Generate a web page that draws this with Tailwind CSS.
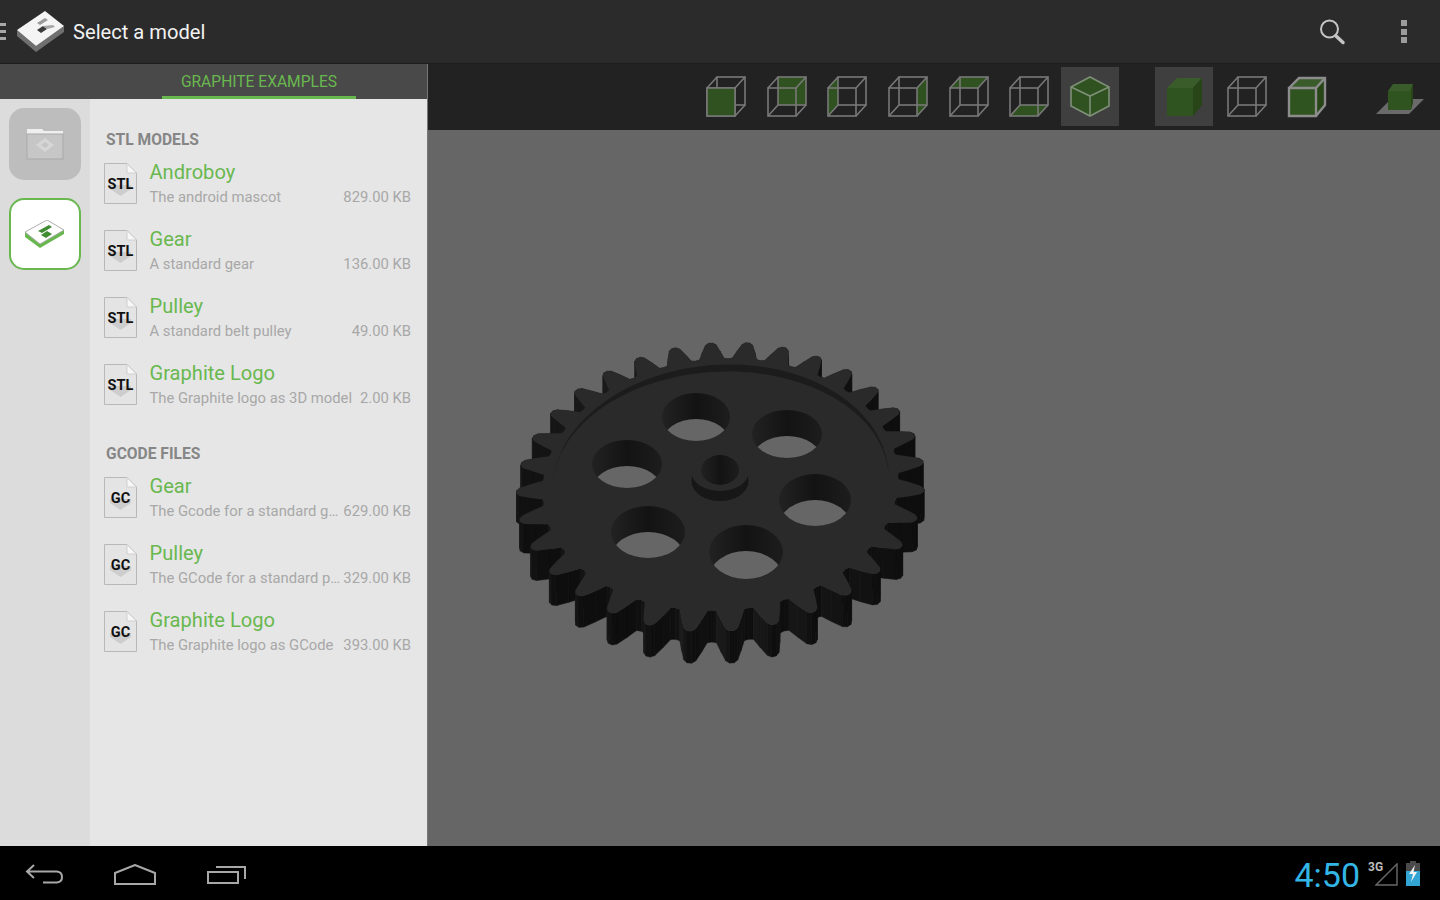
<!DOCTYPE html>
<html lang="en">
<head>
    <meta charset="UTF-8">
    <title>Select a model</title>
    <script src="https://cdn.jsdelivr.net/npm/@tailwindcss/browser@4"></script>
</head>
<body class="bg-black font-['Roboto',sans-serif]">
    <!-- shared icon shapes -->
    <svg class="hidden">
        <symbol id="wire" viewBox="0 0 40 42">
            <g fill="none" stroke="#787878" stroke-width="1.6">
                <rect x="1" y="12" width="28" height="28"/>
                <rect x="11" y="1" width="28" height="28"/>
                <path d="M1 12 11 1M29 12 39 1M1 40 11 29M29 40 39 29"/>
            </g>
        </symbol>
        <symbol id="file" viewBox="0 0 33 41">
            <path d="M.5.5H23L32.500 10V40.500H.5Z" fill="#e4e4e4" stroke="#b8b8b8"/>
            <path d="M23 .5V10H32.500Z" fill="#f7f7f7" stroke="#cfcfcf"/>
            <path d="M6 26 16.500 33 27 26V22H6Z" fill="#cdcdcd"/>
        </symbol>
    </svg>

    <div class="w-[1440px] h-[900px] flex flex-col overflow-hidden">
        <!-- action bar -->
        <header class="h-[64px] shrink-0 bg-[#2b2b2b] border-b border-[#1d1d1d] flex items-center">
            <div class="w-[6px] h-[17px] flex flex-col justify-between">
                <div class="h-[3px] bg-[#a8a8a8]"></div>
                <div class="h-[3px] bg-[#a8a8a8]"></div>
                <div class="h-[3px] bg-[#a8a8a8]"></div>
            </div>
            <svg class="ml-[11px] w-[48px] h-[43px] -mt-[1px]" viewBox="0 0 48 43">
                <path d="M0 20V26L19 42 47 22V16L19 36Z" fill="#6f6f6f"/>
                <path d="M0 20 28 1 47 16 19 36Z" fill="#f4f4f4"/>
                <path d="M20 13 28 8 31 10 23 15Z" fill="#9a9a9a"/>
                <path d="M20 20 26 16 30 19 24 23Z" fill="#3a3a3a"/>
                <path d="M26 16 36 15 38 17 30 19Z" fill="#a5a5a5"/>
            </svg>
            <span class="ml-[8px] mt-[2px] text-[20.150px] text-[#f2f2f2]">Select a model</span>
            <svg class="ml-auto w-[28px] h-[28px]" viewBox="0 0 28 28">
                <circle cx="11.500" cy="11" r="8.500" fill="none" stroke="#c4c4c4" stroke-width="2"/>
                <path d="M18 18 25 24.500" stroke="#c4c4c4" stroke-width="3.500" stroke-linecap="round"/>
            </svg>
            <div class="ml-[55px] mr-[33px] w-[6px] h-[23px] flex flex-col justify-between">
                <div class="h-[6px] bg-[#9c9c9c]"></div>
                <div class="h-[6px] bg-[#9c9c9c]"></div>
                <div class="h-[6px] bg-[#9c9c9c]"></div>
            </div>
        </header>

        <div class="flex h-[782px] shrink-0">
            <!-- left panel -->
            <aside class="w-[428px] shrink-0 flex flex-col border-r border-[#777]">
                <div class="h-[35px] shrink-0 bg-[#494949] pl-[162px]">
                    <div class="w-[194px] h-[35px] border-b-[3px] border-[#69b84f] text-center text-[15.600px] leading-[36px] text-[#69b84f]">GRAPHITE EXAMPLES</div>
                </div>
                <div class="flex-1 flex">
                    <div class="w-[90px] shrink-0 bg-[#dcdcdc] pt-[9px] pl-[9px]">
                        <div class="w-[72px] h-[72px] rounded-[15px] bg-[#bdbdbd] flex items-center justify-center">
                            <svg class="w-[38px] h-[32px]" viewBox="0 0 38 32">
                                <path d="M1 1H16L18 3H37V7H1Z" fill="#efefef"/>
                                <rect x="1" y="6" width="36" height="25" fill="#c6c6c6" stroke="#a9a9a9"/>
                                <path d="M19 10 28 17 19 24 10 17Z" fill="#d6d6d6"/>
                                <path d="M19 14 23 17 19 20 15 17Z" fill="#c6c6c6"/>
                            </svg>
                        </div>
                        <div class="mt-[18px] w-[72px] h-[72px] rounded-[15px] bg-white border-[2.5px] border-[#69b84f] flex items-center justify-center">
                            <svg class="w-[40px] h-[29px]" viewBox="0 0 40 29">
                                <path d="M0 12V17L15 28 39 14V10L15 24Z" fill="#69b84f"/>
                                <path d="M0 12 22 0 39 10 15 24Z" fill="#fff" stroke="#9a9a9a" stroke-width=".8"/>
                                <path d="M13 11 24 5 27 7 17 13ZM16 15 22 11 27 14 21 18Z" fill="#3f8c33"/>
                            </svg>
                        </div>
                    </div>

                    <div class="flex-1 bg-[#e6e6e6] pl-[14px] pr-[16px]">
                        <h2 class="h-[59px] pt-[31px] pl-[2px] text-[15.600px] leading-[20px] font-bold text-[#868686]">STL MODELS</h2>
                        <div class="flex h-[67px]">
                            <div class="relative w-[33px] h-[41px] mt-[5px] shrink-0">
                                <svg class="w-[33px] h-[41px]"><use href="#file"/></svg>
                                <span class="absolute left-0 top-[13px] w-[33px] text-center text-[14.500px] leading-[18px] font-bold text-[#111]">STL</span>
                            </div>
                            <div class="ml-[12.500px] flex-1 min-w-0">
                                <div class="h-[28px] text-[20.100px] leading-[28px] text-[#69b84f]">Androboy</div>
                                <div class="flex justify-between whitespace-nowrap h-[22px] text-[14.800px] leading-[22px] text-[#a8a8a8]"><span>The android mascot</span><span>829.00 KB</span></div>
                            </div>
                        </div>
                        <div class="flex h-[67px]">
                            <div class="relative w-[33px] h-[41px] mt-[5px] shrink-0">
                                <svg class="w-[33px] h-[41px]"><use href="#file"/></svg>
                                <span class="absolute left-0 top-[13px] w-[33px] text-center text-[14.500px] leading-[18px] font-bold text-[#111]">STL</span>
                            </div>
                            <div class="ml-[12.500px] flex-1 min-w-0">
                                <div class="h-[28px] text-[20.100px] leading-[28px] text-[#69b84f]">Gear</div>
                                <div class="flex justify-between whitespace-nowrap h-[22px] text-[14.800px] leading-[22px] text-[#a8a8a8]"><span>A standard gear</span><span>136.00 KB</span></div>
                            </div>
                        </div>
                        <div class="flex h-[67px]">
                            <div class="relative w-[33px] h-[41px] mt-[5px] shrink-0">
                                <svg class="w-[33px] h-[41px]"><use href="#file"/></svg>
                                <span class="absolute left-0 top-[13px] w-[33px] text-center text-[14.500px] leading-[18px] font-bold text-[#111]">STL</span>
                            </div>
                            <div class="ml-[12.500px] flex-1 min-w-0">
                                <div class="h-[28px] text-[20.100px] leading-[28px] text-[#69b84f]">Pulley</div>
                                <div class="flex justify-between whitespace-nowrap h-[22px] text-[14.800px] leading-[22px] text-[#a8a8a8]"><span>A standard belt pulley</span><span>49.00 KB</span></div>
                            </div>
                        </div>
                        <div class="flex h-[67px]">
                            <div class="relative w-[33px] h-[41px] mt-[5px] shrink-0">
                                <svg class="w-[33px] h-[41px]"><use href="#file"/></svg>
                                <span class="absolute left-0 top-[13px] w-[33px] text-center text-[14.500px] leading-[18px] font-bold text-[#111]">STL</span>
                            </div>
                            <div class="ml-[12.500px] flex-1 min-w-0">
                                <div class="h-[28px] text-[20.100px] leading-[28px] text-[#69b84f]">Graphite Logo</div>
                                <div class="flex justify-between whitespace-nowrap h-[22px] text-[14.800px] leading-[22px] text-[#a8a8a8]"><span>The Graphite logo as 3D model</span><span>2.00 KB</span></div>
                            </div>
                        </div>

                        <h2 class="h-[46px] pt-[18px] pl-[2px] text-[15.600px] leading-[20px] font-bold text-[#868686]">GCODE FILES</h2>
                        <div class="flex h-[67px]">
                            <div class="relative w-[33px] h-[41px] mt-[5px] shrink-0">
                                <svg class="w-[33px] h-[41px]"><use href="#file"/></svg>
                                <span class="absolute left-0 top-[13px] w-[33px] text-center text-[14.500px] leading-[18px] font-bold text-[#111]">GC</span>
                            </div>
                            <div class="ml-[12.500px] flex-1 min-w-0">
                                <div class="h-[28px] text-[20.100px] leading-[28px] text-[#69b84f]">Gear</div>
                                <div class="flex justify-between whitespace-nowrap h-[22px] text-[14.800px] leading-[22px] text-[#a8a8a8]"><span>The Gcode for a standard g…</span><span>629.00 KB</span></div>
                            </div>
                        </div>
                        <div class="flex h-[67px]">
                            <div class="relative w-[33px] h-[41px] mt-[5px] shrink-0">
                                <svg class="w-[33px] h-[41px]"><use href="#file"/></svg>
                                <span class="absolute left-0 top-[13px] w-[33px] text-center text-[14.500px] leading-[18px] font-bold text-[#111]">GC</span>
                            </div>
                            <div class="ml-[12.500px] flex-1 min-w-0">
                                <div class="h-[28px] text-[20.100px] leading-[28px] text-[#69b84f]">Pulley</div>
                                <div class="flex justify-between whitespace-nowrap h-[22px] text-[14.800px] leading-[22px] text-[#a8a8a8]"><span>The GCode for a standard p…</span><span>329.00 KB</span></div>
                            </div>
                        </div>
                        <div class="flex h-[67px]">
                            <div class="relative w-[33px] h-[41px] mt-[5px] shrink-0">
                                <svg class="w-[33px] h-[41px]"><use href="#file"/></svg>
                                <span class="absolute left-0 top-[13px] w-[33px] text-center text-[14.500px] leading-[18px] font-bold text-[#111]">GC</span>
                            </div>
                            <div class="ml-[12.500px] flex-1 min-w-0">
                                <div class="h-[28px] text-[20.100px] leading-[28px] text-[#69b84f]">Graphite Logo</div>
                                <div class="flex justify-between whitespace-nowrap h-[22px] text-[14.800px] leading-[22px] text-[#a8a8a8]"><span>The Graphite logo as GCode</span><span>393.00 KB</span></div>
                            </div>
                        </div>
                    </div>
                </div>
            </aside>

            <!-- model viewer -->
            <main class="flex-1 flex flex-col">
                <div class="h-[66px] shrink-0 bg-[#222] pl-[269px] pt-[3px] flex gap-[2.700px]">
                    <div class="w-[58px] h-[59px] flex items-center justify-center">
                        <svg class="w-[40px] h-[42px]" viewBox="0 0 40 42"><use href="#wire" width="40" height="42"/><path d="M1 12H29V40H1Z" fill="#2f5220" stroke="#787878" stroke-width="1.600"/></svg>
                    </div>
                    <div class="w-[58px] h-[59px] flex items-center justify-center">
                        <svg class="w-[40px] h-[42px]" viewBox="0 0 40 42"><path d="M11 1H39V29H11Z" fill="#2f5220"/><use href="#wire" width="40" height="42"/></svg>
                    </div>
                    <div class="w-[58px] h-[59px] flex items-center justify-center">
                        <svg class="w-[40px] h-[42px]" viewBox="0 0 40 42"><path d="M1 12 11 1V29L1 40Z" fill="#2f5220"/><use href="#wire" width="40" height="42"/></svg>
                    </div>
                    <div class="w-[58px] h-[59px] flex items-center justify-center">
                        <svg class="w-[40px] h-[42px]" viewBox="0 0 40 42"><path d="M29 12 39 1V29L29 40Z" fill="#2f5220"/><use href="#wire" width="40" height="42"/></svg>
                    </div>
                    <div class="w-[58px] h-[59px] flex items-center justify-center">
                        <svg class="w-[40px] h-[42px]" viewBox="0 0 40 42"><path d="M1 12 11 1H39L29 12Z" fill="#2f5220"/><use href="#wire" width="40" height="42"/></svg>
                    </div>
                    <div class="w-[58px] h-[59px] flex items-center justify-center">
                        <svg class="w-[40px] h-[42px]" viewBox="0 0 40 42"><path d="M1 40 11 29H39L29 40Z" fill="#2f5220"/><use href="#wire" width="40" height="42"/></svg>
                    </div>
                    <div class="w-[58px] h-[59px] bg-[#3f3f3f] flex items-center justify-center">
                        <svg class="w-[40px] h-[42px]" viewBox="0 0 40 42">
                            <path d="M20 1 39 11V30L20 40 1 30V11Z" fill="#2f5220" stroke="#7e8f78" stroke-width="1.600"/>
                            <path d="M1 11 20 20 39 11M20 20V40" fill="none" stroke="#7e8f78" stroke-width="1.600"/>
                        </svg>
                    </div>
                    <div class="w-[58px] h-[59px] ml-[33px] bg-[#3f3f3f] flex items-center justify-center">
                        <svg class="w-[40px] h-[42px]" viewBox="0 0 40 42">
                            <path d="M3 12H29V40H3Z" fill="#30541f"/>
                            <path d="M3 12 13 2H38L29 12Z" fill="#3a5c2b"/>
                            <path d="M29 12 38 2V29L29 40Z" fill="#274517"/>
                        </svg>
                    </div>
                    <div class="w-[58px] h-[59px] ml-[2px] flex items-center justify-center">
                        <svg class="w-[40px] h-[42px]" viewBox="0 0 40 42"><use href="#wire" width="40" height="42"/></svg>
                    </div>
                    <div class="w-[58px] h-[59px] flex items-center justify-center">
                        <svg class="w-[40px] h-[42px]" viewBox="0 0 40 42">
                            <path d="M2 12H29V40H2Z" fill="#30541f"/>
                            <path d="M2 12 12 2H38L29 12Z" fill="#3a5c2b"/>
                            <path d="M29 12 38 2V29L29 40Z" fill="#274517"/>
                            <path d="M2 12H29V40H2ZM2 12 12 2H38V29L29 40M29 12 38 2" fill="none" stroke="#8c8c8c" stroke-width="2.400"/>
                        </svg>
                    </div>
                    <div class="w-[58px] h-[59px] ml-[32px] pt-[5px] flex items-center justify-center">
                        <svg class="w-[48px] h-[32px]" viewBox="0 0 48 32">
                            <path d="M0 31 15 16H48L33 31Z" fill="#6a6a6a"/>
                            <path d="M12 8H35V27H12Z" fill="#30541f"/>
                            <path d="M12 8 17 1H37L35 8Z" fill="#3a5c2b"/>
                            <path d="M35 8 37 1V20L35 27Z" fill="#274517"/>
                        </svg>
                    </div>
                </div>
                <div class="flex-1 bg-[#666] relative">
                    <svg id="gear" class="absolute inset-0 w-full h-full" viewBox="428 130 1012 716"></svg>
                </div>
            </main>
        </div>

        <!-- system bar -->
        <footer class="h-[54px] shrink-0 bg-black flex items-center pt-[3px]">
            <svg class="ml-[25px] w-[40px] h-[26px]" viewBox="0 0 40 26" fill="none" stroke="#a8a8a8" stroke-width="2">
                <path d="M9 3 2 9.500 9 16M2 9.500H32Q37 10 37 15T32 20.500H18"/>
            </svg>
            <svg class="ml-[49px] w-[42px] h-[21px]" viewBox="0 0 42 21" fill="none" stroke="#a8a8a8" stroke-width="2">
                <path d="M1 20V9L21 1 41 9V20Z"/>
            </svg>
            <svg class="ml-[50px] w-[40px] h-[20px]" viewBox="0 0 40 20" fill="none" stroke="#a8a8a8" stroke-width="2">
                <path d="M2 7H32V18H2ZM10 2H39V14"/>
            </svg>
            <div class="ml-auto flex items-center">
                <span class="text-[34px] leading-[40px] font-normal text-[#33b5e5]">4:50</span>
                <div class="relative w-[30px] h-[26px] ml-[8px] -mt-[2px]">
                    <span class="absolute left-0 -top-[1px] text-[12px] leading-[14px] font-bold text-[#bdbdbd]">3G</span>
                    <svg class="absolute left-[7px] top-[2px] w-[23px] h-[23px]" viewBox="0 0 23 23" fill="none" stroke="#6a6a6a" stroke-width="1.400"><path d="M1 22 22 1V22Z"/></svg>
                </div>
                <svg class="ml-[7px] mr-[19px] -mt-[2px] w-[16px] h-[25px]" viewBox="0 0 16 25">
                    <path d="M5 0H11V2H15V10H1V2H5Z" fill="#4a4a4a"/>
                    <rect x="1" y="10" width="14" height="15" fill="#33a5d5"/>
                    <path d="M10 4 4 13H8L6 21 12 11H8.500Z" fill="#f2f2f2"/>
                </svg>
            </div>
        </footer>
    </div>

    <script>
        // Gear is a perspective projection of a flat toothed disc, extruded downward
        const cx = 720.5, cy = 476, rx = 203.5, ry = 144.5;
        const project = (u, v) => {
            const s = 1 + 0.07 * v;
            const x = cx + rx * u * s;
            return [x, cy + ry * v * s - 0.037 * (x - cx) + 1];
        };
        const fmt = pts => pts.map(p => p[0].toFixed(1) + ',' + p[1].toFixed(1)).join(' ');

        const profile = [[-5.62, 0.87], [-4.2, 0.875], [-2.9, 0.93], [-1.6, 0.985], [-0.6, 1], [0.6, 1], [1.6, 0.985], [2.9, 0.93], [4.2, 0.875]];
        const disc = [];
        for (let k = 0; k < 32; k++) {
            for (const [a, r] of profile) {
                const t = (-93 + 11.25 * k + a) * Math.PI / 180;
                disc.push([r * Math.cos(t), r * Math.sin(t)]);
            }
        }

        let out = '';
        // walls, back to front
        const walls = disc.map((p, i) => {
            const q = disc[(i + 1) % disc.length];
            const du = q[0] - p[0], dv = q[1] - p[1], len = Math.hypot(du, dv);
            const nx = dv / len, ny = -du / len;
            const c = Math.round(Math.max(12, Math.min(38, 24 - 9 * ny - 5 * nx)));
            const a = project(p[0], p[1]), b = project(q[0], q[1]);
            const da = 28 + 4 * p[1], db = 28 + 4 * q[1];
            return { y: (a[1] + b[1]) / 2, c, pts: [a, b, [b[0], b[1] + db], [a[0], a[1] + da]] };
        }).sort((m, n) => m.y - n.y);
        for (const w of walls) {
            out += `<polygon points="${fmt(w.pts)}" fill="rgb(${w.c},${w.c},${w.c})" stroke="rgb(${w.c},${w.c},${w.c})" stroke-width=".5"/>`;
        }
        out += `<polygon points="${fmt(disc.map(p => project(p[0], p[1])))}" fill="#2a2a2a"/>`;

        // raised rim, only visible on the far half
        const rimOuter = [], rimInner = [];
        for (let d = 180; d <= 362; d += 3) {
            const t = d * Math.PI / 180;
            const p = project(0.825 * Math.cos(t), 0.825 * Math.sin(t));
            const f = Math.abs(Math.sin(t));
            rimOuter.push(p);
            rimInner.push([p[0] - 2 * f, p[1] + 1 + 6 * f]);
        }
        out += `<polygon points="${fmt(rimOuter.concat(rimInner.reverse()))}" fill="#1c1c1c"/>`;

        // through holes: the wall, then the floor seen through the opening
        const holes = [[696, 417, 34, 24], [787, 434, 35, 24], [627, 464, 35, 24], [815, 500, 36, 26], [648, 532, 37, 26], [746, 552, 37, 27]];
        out += `<defs><linearGradient id="wall"><stop offset="0" stop-color="#222"/><stop offset=".5" stop-color="#131313"/><stop offset="1" stop-color="#1d1d1d"/></linearGradient>`;
        holes.forEach((h, i) => {
            out += `<clipPath id="hole${i}"><ellipse cx="${h[0]}" cy="${h[1]}" rx="${h[2]}" ry="${h[3]}"/></clipPath>`;
        });
        out += `</defs>`;
        holes.forEach((h, i) => {
            out += `<ellipse cx="${h[0]}" cy="${h[1]}" rx="${h[2]}" ry="${h[3]}" fill="url(#wall)"/>`;
            out += `<ellipse clip-path="url(#hole${i})" cx="${h[0]}" cy="${h[1] + 26}" rx="${h[2]}" ry="${h[3]}" fill="#666"/>`;
        });

        // centre hub
        out += `<ellipse cx="720" cy="481" rx="28.5" ry="20" fill="#171717"/>`;
        out += `<ellipse cx="720" cy="472" rx="28.5" ry="19" fill="#2a2a2a"/>`;
        out += `<ellipse cx="720" cy="470" rx="19" ry="15" fill="url(#wall)"/>`;

        document.getElementById('gear').innerHTML = out;
    </script>
</body>
</html>
